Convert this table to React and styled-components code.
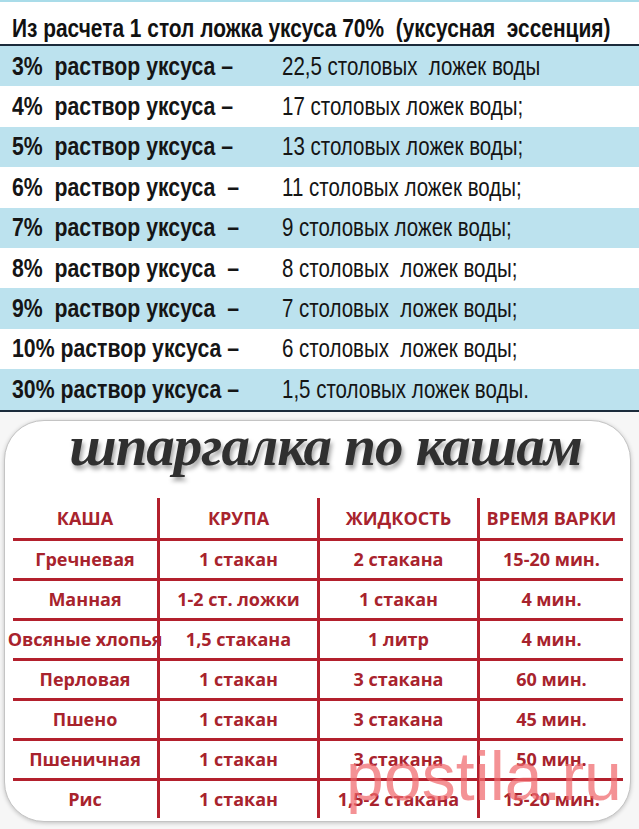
import styled, { createGlobalStyle } from 'styled-components';

const GlobalStyle = createGlobalStyle`
  html, body {
    margin: 0;
    padding: 0;
    background: #ffffff;
  }
  #root {
    width: 639px;
    height: 829px;
    overflow: hidden;
  }
`;

const vinegarRows = [
    ['3%  раствор уксуса –', '22,5 столовых  ложек воды'],
    ['4%  раствор уксуса –', '17 столовых ложек воды;'],
    ['5%  раствор уксуса –', '13 столовых ложек воды;'],
    ['6%  раствор уксуса  –', '11 столовых ложек воды;'],
    ['7%  раствор уксуса  –', '9 столовых ложек воды;'],
    ['8%  раствор уксуса  –', '8 столовых  ложек воды;'],
    ['9%  раствор уксуса  –', '7 столовых  ложек воды;'],
    ['10% раствор уксуса –', '6 столовых  ложек воды;'],
    ['30% раствор уксуса –', '1,5 столовых ложек воды.'],
];

const porridgeHead = ['КАША', 'КРУПА', 'ЖИДКОСТЬ', 'ВРЕМЯ ВАРКИ'];

const porridgeRows = [
    ['Гречневая', '1 стакан', '2 стакана', '15-20 мин.'],
    ['Манная', '1-2 ст. ложки', '1 стакан', '4 мин.'],
    ['Овсяные хлопья', '1,5 стакана', '1 литр', '4 мин.'],
    ['Перловая', '1 стакан', '3 стакана', '60 мин.'],
    ['Пшено', '1 стакан', '3 стакана', '45 мин.'],
    ['Пшеничная', '1 стакан', '3 стакана', '50 мин.'],
    ['Рис', '1 стакан', '1,5-2 стакана', '15-20 мин.'],
];

const App = () => {
    return (
        <Page>
            <GlobalStyle />
            <Vinegar>
                <Heading>
                    <Narrow $squeeze={0.836} $bold>Из расчета 1 стол ложка уксуса 70%  (уксусная  эссенция)</Narrow>
                </Heading>
                {vinegarRows.map(([solution, water], i) => (
                    <DilutionRow key={solution} $tinted={i % 2 === 0}>
                        <Narrow $squeeze={0.85} $bold>{solution}</Narrow>
                        <Narrow $squeeze={0.82}>{water}</Narrow>
                    </DilutionRow>
                ))}
            </Vinegar>

            <Lower>
                <Card>
                    <Title>шпаргалка по кашам</Title>
                    <Table>
                        {porridgeHead.map((label, c) => (
                            <Cell key={label} $col={c}>{label}</Cell>
                        ))}
                        {porridgeRows.map((row, r) =>
                            row.map((value, c) => (
                                <Cell key={`${r}-${c}`} $col={c} $lined>{value}</Cell>
                            ))
                        )}
                    </Table>
                    <Watermark>postila.ru</Watermark>
                </Card>
            </Lower>
        </Page>
    );
};

export default App;

const Page = styled.div`
  width: 639px;
  height: 829px;
  display: flex;
  flex-direction: column;
  background: #ffffff;
`;

const Vinegar = styled.section`
  border-top: 2px solid #a9dce9;
  border-bottom: 2px solid #1b2b3b;
  font-family: "Liberation Sans", Arial, sans-serif;
  font-size: 25px;
  color: #111;
`;

// the source uses a condensed face; squeeze the regular one horizontally
const Narrow = styled.span`
  display: inline-block;
  white-space: pre;
  font-weight: ${p => (p.$bold ? 700 : 400)};
  transform: scaleX(${p => p.$squeeze});
  transform-origin: left center;
`;

const Heading = styled.div`
  padding: 12px 0 2px 12px;
  height: 28px;
  line-height: 28px;
  white-space: nowrap;
  border-bottom: 2px solid #1b2b3b;
`;

const DilutionRow = styled.div`
  display: grid;
  grid-template-columns: 270px 1fr;
  align-items: center;
  height: 40.4px;
  padding-left: 12px;
  background: ${p => (p.$tinted ? '#bce2ee' : '#ffffff')};
  color: #151515;
`;

const Lower = styled.section`
  flex: 1;
  padding: 8px 8px 7px 4px;
  background: #f6f6f6;
`;

const Card = styled.div`
  position: relative;
  height: 100%;
  box-sizing: border-box;
  padding: 0 0 0 8px;
  background: #ffffff;
  border: 1px solid #c4c4c4;
  border-radius: 40px;
  box-shadow: 0 1px 4px rgba(0, 0, 0, 0.22);
`;

const Title = styled.h1`
  margin: 0;
  padding: 0 0 0 8px;
  height: 77px;
  line-height: 62px;
  text-align: center;
  font-family: "Liberation Serif", "DejaVu Serif", serif;
  font-style: italic;
  font-weight: 700;
  font-size: 57px;
  letter-spacing: -1px;
  color: #303030;
  text-shadow: 2px 4px 4px rgba(0, 0, 0, 0.35);
  transform: translateY(-6px);
`;

const Table = styled.div`
  display: grid;
  grid-template-columns: 144px 160px 160px 146px;
  grid-auto-rows: 40px;
`;

const Cell = styled.div`
  box-sizing: border-box;
  display: flex;
  align-items: center;
  justify-content: center;
  white-space: nowrap;
  font-family: "Open Sans", Lato, sans-serif;
  font-weight: 700;
  font-size: 18px;
  color: #a8232d;
  border-left: ${p => (p.$col ? '3px solid #b3202d' : 'none')};
  border-top: ${p => (p.$lined ? '3px solid #b3202d' : 'none')};
`;

const Watermark = styled.div`
  position: absolute;
  left: 341px;
  top: 321px;
  font-family: "Liberation Sans", Arial, sans-serif;
  font-size: 68px;
  line-height: 1;
  color: rgba(240, 104, 108, 0.72);
  pointer-events: none;
`;
